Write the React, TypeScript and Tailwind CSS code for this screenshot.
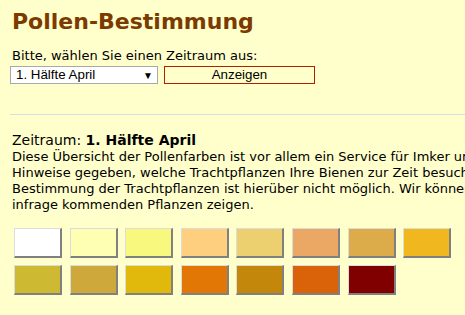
const row1 = ["#ffffff", "#ffffb3", "#f8f87f", "#fecf7e", "#eccf6f", "#eba764", "#dcac4a", "#f0b71e"];
const row2 = ["#cdb932", "#cea83a", "#e0b90c", "#e37706", "#c2870b", "#da6208", "#800000"];

function Swatch({ color }: { color: string }) {
  return (
    <div
      className="w-[48px] h-[30px] border-t border-l border-t-[#dcdcdc] border-l-[#dcdcdc] border-b-2 border-r-2 border-b-[#808080] border-r-[#808080]"
      style={{ backgroundColor: color }}
    />
  );
}

export default function App() {
  return (
    <div className="w-[465px] h-[315px] overflow-hidden bg-[#ffffcc] font-['DejaVu_Sans',Verdana,sans-serif] text-black">
      <div className="w-[640px] pl-[12px] pt-[8px]">
        <h1 className="text-[22px] leading-[28px] font-bold text-[#7b3b00]">Pollen-Bestimmung</h1>

        <div className="mt-[12px] text-[13px] leading-[16px]">Bitte, wählen Sie einen Zeitraum aus:</div>
        <div className="flex items-center gap-[6px] mt-[2px] -ml-[2px] font-['Liberation_Sans',Arial,sans-serif] text-[13.33px]">
          <div className="w-[148px] h-[18px] bg-white border border-[#a9a9a9] flex items-center justify-between pl-[5px] pr-[4px]">
            <span>1. Hälfte April</span>
            <span className="text-[10px]">▼</span>
          </div>
          <div className="w-[151px] h-[18px] border border-[#b01f00] flex items-center justify-center">Anzeigen</div>
        </div>

        <div className="mt-[30px] -ml-[2px] h-px bg-[#dcdce6]" />

        <div className="mt-[16px] text-[14px] leading-[18px]">
          Zeitraum: <b>1. Hälfte April</b>
        </div>
        <div className="text-[13px] leading-[16px] whitespace-nowrap">
          <div>Diese Übersicht der Pollenfarben ist vor allem ein Service für Imker und soll</div>
          <div>Hinweise gegeben, welche Trachtpflanzen Ihre Bienen zur Zeit besuchen. Eine genaue</div>
          <div>Bestimmung der Trachtpflanzen ist hierüber nicht möglich. Wir können Ihnen nur die Farben der</div>
          <div>infrage kommenden Pflanzen zeigen.</div>
        </div>

        <div className="mt-[15px] flex flex-col gap-[7px] pl-[2px]">
          <div className="flex gap-[7.6px]">
            {row1.map((c) => (
              <Swatch key={c} color={c} />
            ))}
          </div>
          <div className="flex gap-[7.6px]">
            {row2.map((c) => (
              <Swatch key={c} color={c} />
            ))}
          </div>
        </div>
      </div>
    </div>
  );
}
